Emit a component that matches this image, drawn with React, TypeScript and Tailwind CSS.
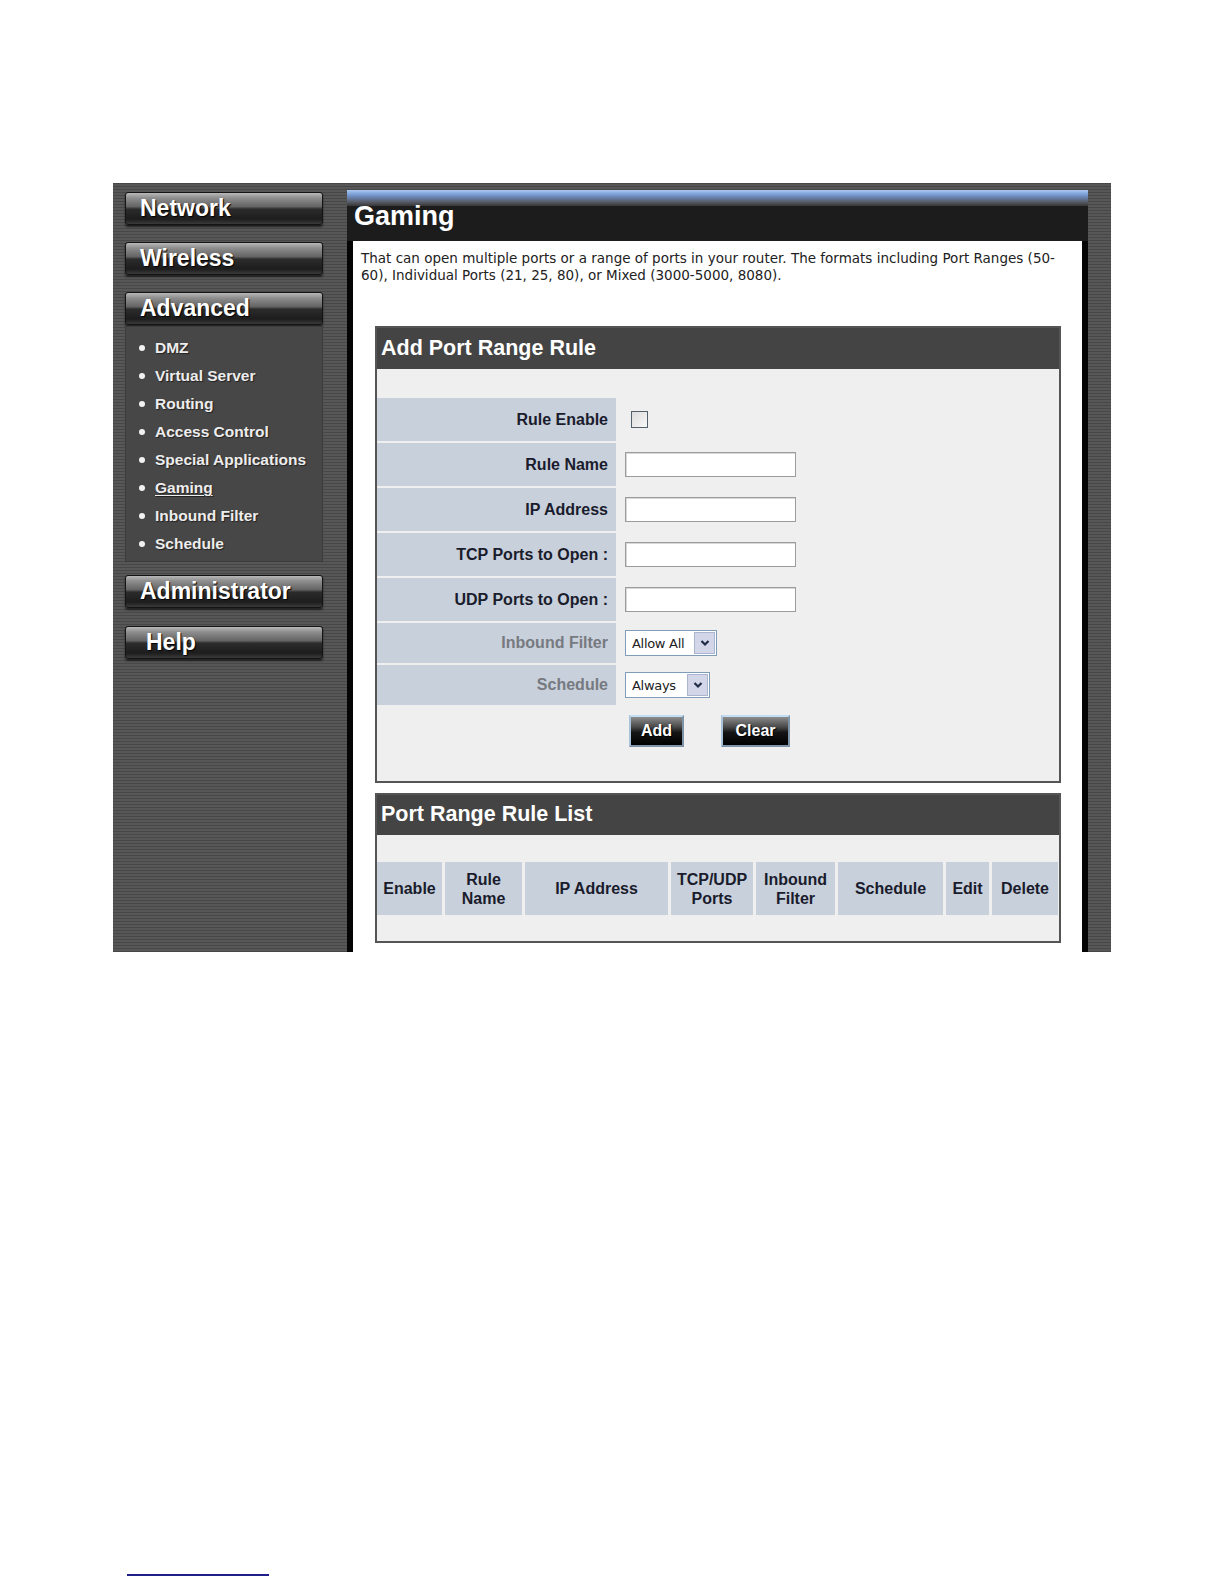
import React from 'react'

const menu = ['DMZ', 'Virtual Server', 'Routing', 'Access Control', 'Special Applications', 'Gaming', 'Inbound Filter', 'Schedule']

const columns = [
    { lines: ['Enable'] },
    { lines: ['Rule', 'Name'] },
    { lines: ['IP Address'] },
    { lines: ['TCP/UDP', 'Ports'] },
    { lines: ['Inbound', 'Filter'] },
    { lines: ['Schedule'] },
    { lines: ['Edit'] },
    { lines: ['Delete'] },
]

function NavButton({ label, pad }: { label: string; pad: string }) {
    return (
        <div className={`h-[33px] w-[198px] rounded-[3px] border border-[#141414] bg-[image:linear-gradient(180deg,#b8b8b8_0%,#8e8e8e_16%,#646464_44%,#2b2b2b_52%,#1d1d1d_84%,#3a3a3a_100%)] shadow-[0_2px_2px_rgba(0,0,0,0.6)] ${pad} text-[23px] font-bold leading-[30px] text-white [text-shadow:1px_1px_1px_#000]`}>
            {label}
        </div>
    )
}

function FieldRow({ label, h, muted, children }: { label: string; h: string; muted?: boolean; children?: React.ReactNode }) {
    return (
        <div className={`flex ${h}`}>
            <div className={`flex w-[239px] items-center justify-end bg-[#c8d0dc] pr-[8px] text-[16px] font-bold ${muted ? 'text-[#767a80]' : 'text-[#1a1c2c]'}`}>
                {label}
            </div>
            <div className="flex flex-1 items-center pl-[9px]">{children}</div>
        </div>
    )
}

function TextInput() {
    return <div className="h-[25px] w-[171px] border border-[#9c9c9c] bg-white shadow-[inset_1px_1px_0_#d8d8d8]" />
}

function Select({ value, w }: { value: string; w: string }) {
    return (
        <div className={`flex h-[26px] ${w} items-center border border-[#7f9db9] bg-white`}>
            <span className="flex-1 pl-[6px] font-['DejaVu_Sans',sans-serif] text-[13px] leading-none tracking-[-0.3px] text-[#222]">{value}</span>
            <span className="mr-[1px] flex h-[22px] w-[21px] items-center justify-center border border-[#aab6cf] bg-[#d3d6e8]">
                <svg viewBox="0 0 10 10" className="h-[10px] w-[10px]">
                    <path d="M1.5 3 L5 6.5 L8.5 3" fill="none" stroke="#1f2a44" strokeWidth="2.2" />
                </svg>
            </span>
        </div>
    )
}

function ActionButton({ label, w }: { label: string; w: string }) {
    return (
        <div className={`flex h-[32px] ${w} items-center justify-center border-2 border-t-[#c4dcf2] border-l-[#a9c1d9] border-r-[#7d93a8] border-b-[#7d93a8] bg-[image:linear-gradient(180deg,#8c8c8c_0%,#4a4a4a_35%,#151515_55%,#000_100%)] text-[16px] font-bold text-white [text-shadow:1px_1px_0_#000]`}>
            {label}
        </div>
    )
}

function SectionHeader({ title }: { title: string }) {
    return (
        <div className="flex h-full items-center bg-[#444] pl-[4px] text-[21.5px] font-bold leading-none text-white">
            {title}
        </div>
    )
}

export default function App() {
    return (
        <div className="min-h-[1584px] bg-white pt-[183px] font-['Liberation_Sans',Arial,sans-serif]">
            <div className="ml-[113px] flex h-[769px] w-[998px] bg-[#4f4f4f] bg-[image:repeating-linear-gradient(180deg,#474747_0px,#474747_1px,#575757_1px,#575757_3px)]">
                {/* side menu */}
                <div className="flex w-[234px] flex-col pl-[12px] pt-[9px]">
                    <NavButton label="Network" pad="pl-[14px]" />
                    <div className="mt-[17px]">
                        <NavButton label="Wireless" pad="pl-[14px]" />
                    </div>
                    <div className="mt-[17px]">
                        <NavButton label="Advanced" pad="pl-[14px]" />
                    </div>
                    <div className="mt-[1px] h-[236px] w-[198px] border border-[#3c3c3c] bg-[#474747] pl-[13px] pt-[7px]">
                        {menu.map((item) => (
                            <div key={item} className="flex h-[28px] items-center text-[15.5px] font-bold text-[#ededed] [text-shadow:1px_1px_1px_#222]">
                                <span className="mr-[10px] h-[6px] w-[6px] rounded-full bg-[#f2f2f2]" />
                                <span className={item === 'Gaming' ? 'underline underline-offset-2' : ''}>{item}</span>
                            </div>
                        ))}
                    </div>
                    <div className="mt-[13px]">
                        <NavButton label="Administrator" pad="pl-[14px]" />
                    </div>
                    <div className="mt-[18px]">
                        <NavButton label="Help" pad="pl-[20px]" />
                    </div>
                </div>

                {/* main */}
                <div className="flex w-[741px] flex-col pt-[7px]">
                    <div className="h-[16px] bg-[image:linear-gradient(180deg,#abc8f0_0%,#7ea2da_25%,#6884b4_45%,#5a606c_72%,#363636_100%)]" />
                    <div className="h-[35px] bg-[#1c1c1c] pl-[7px] pt-[1px] text-[27px] font-bold leading-[18px] text-white">
                        Gaming
                    </div>
                    <div className="flex flex-1">
                        <div className="w-[6px] bg-[#050505]" />
                        <div className="flex-1 bg-white pl-[8px] pt-[9px]">
                            <p className="font-['DejaVu_Sans',sans-serif] text-[13.5px] leading-[17px] text-[#222]">
                                That can open multiple ports or a range of ports in your router. The formats including Port Ranges (50-
                                <br />
                                60), Individual Ports (21, 25, 80), or Mixed (3000-5000, 8080).
                            </p>

                            <div className="ml-[14px] mt-[42px] w-[686px] border-2 border-[#555]">
                                <div className="h-[41px]">
                                    <SectionHeader title="Add Port Range Rule" />
                                </div>
                                <div className="bg-[#efefef] pb-[34px] pt-[29px]">
                                    <div className="flex flex-col gap-[2px]">
                                        <FieldRow label="Rule Enable" h="h-[43px]">
                                            <div className="ml-[6px] h-[17px] w-[17px] border border-[#52606e] bg-[image:linear-gradient(135deg,#dcdcdc,#f8f8f8)]" />
                                        </FieldRow>
                                        <FieldRow label="Rule Name" h="h-[43px]">
                                            <TextInput />
                                        </FieldRow>
                                        <FieldRow label="IP Address" h="h-[43px]">
                                            <TextInput />
                                        </FieldRow>
                                        <FieldRow label="TCP Ports to Open :" h="h-[43px]">
                                            <TextInput />
                                        </FieldRow>
                                        <FieldRow label="UDP Ports to Open :" h="h-[43px]">
                                            <TextInput />
                                        </FieldRow>
                                        <FieldRow label="Inbound Filter" h="h-[40px]" muted>
                                            <Select value="Allow All" w="w-[92px]" />
                                        </FieldRow>
                                        <FieldRow label="Schedule" h="h-[40px]" muted>
                                            <Select value="Always" w="w-[85px]" />
                                        </FieldRow>
                                    </div>
                                    <div className="mt-[10px] flex pl-[252px]">
                                        <ActionButton label="Add" w="w-[55px]" />
                                        <div className="ml-[37px]">
                                            <ActionButton label="Clear" w="w-[69px]" />
                                        </div>
                                    </div>
                                </div>
                            </div>

                            <div className="ml-[14px] mt-[10px] w-[686px] border-2 border-[#555]">
                                <div className="h-[40px]">
                                    <SectionHeader title="Port Range Rule List" />
                                </div>
                                <div className="bg-[#efefef] pb-[26px] pt-[27px]">
                                    <div className="grid h-[53px] grid-cols-[65px_77px_143px_82px_79px_105px_43px_66px] gap-x-[3px]">
                                        {columns.map((col) => (
                                            <div key={col.lines.join(' ')} className="flex flex-col items-center justify-center bg-[#c8d0dc] text-center text-[16px] font-bold leading-[19px] text-[#1a1c2c]">
                                                {col.lines.map((line) => (
                                                    <span key={line}>{line}</span>
                                                ))}
                                            </div>
                                        ))}
                                    </div>
                                </div>
                            </div>
                        </div>
                        <div className="w-[6px] bg-[#050505]" />
                    </div>
                </div>

                <div className="w-[23px]" />
            </div>

            <div className="ml-[127px] mt-[622px] h-[2px] w-[142px] bg-[#1f1f8c]" />
        </div>
    )
}
